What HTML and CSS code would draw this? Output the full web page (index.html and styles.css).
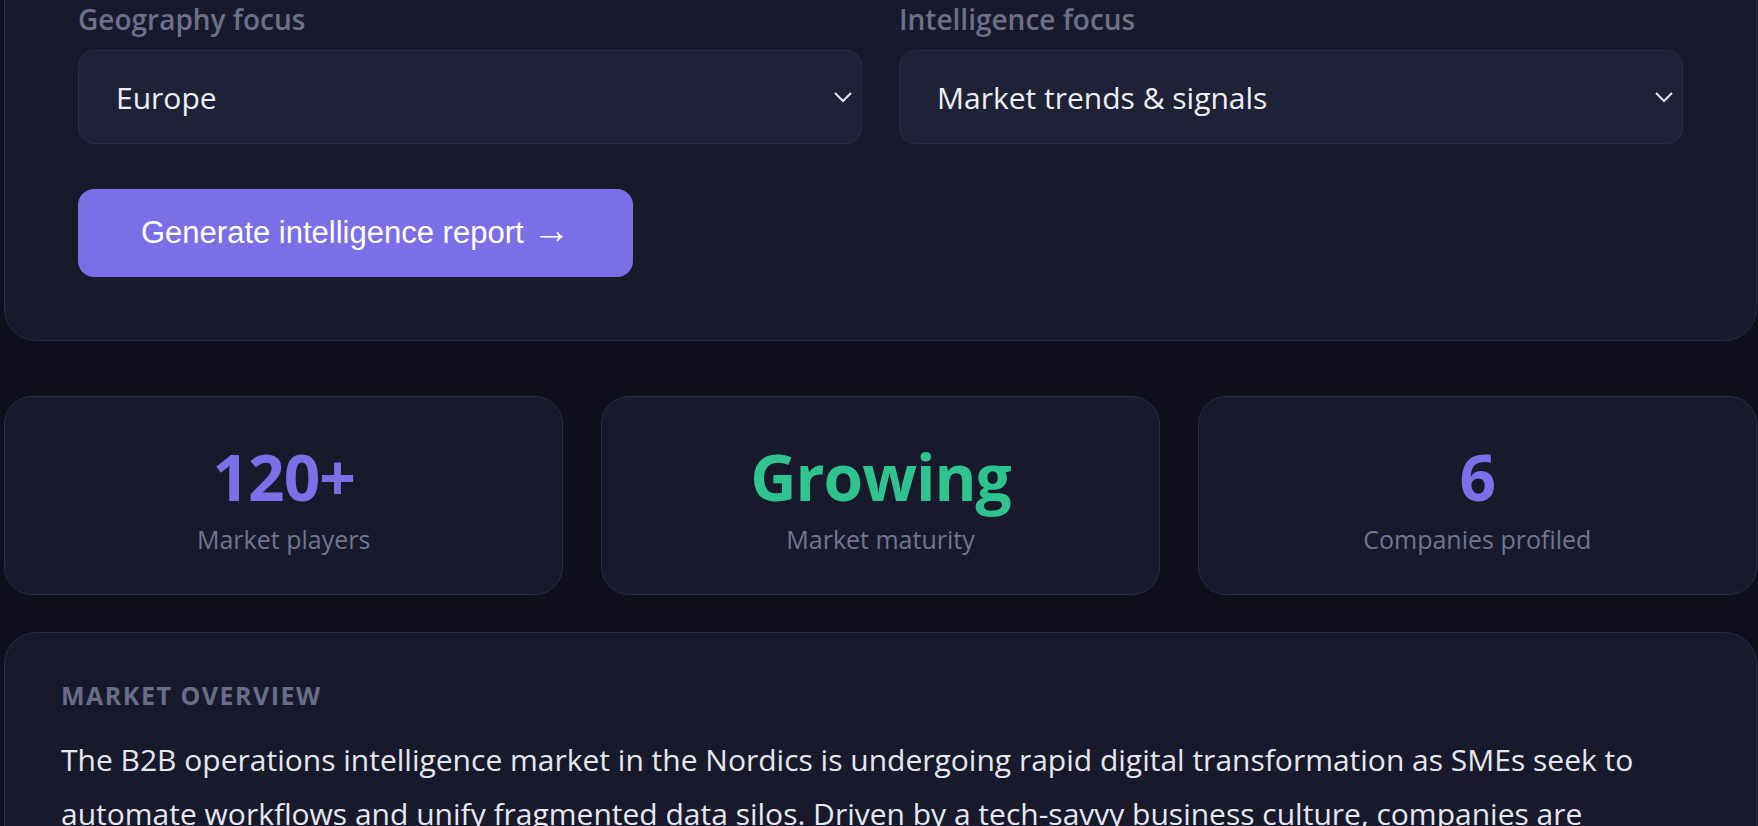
FILE: index.html
```html
<!DOCTYPE html>
<html lang="en">
<head>
  <meta charset="UTF-8" />
  <title>Market Intelligence</title>
  <link rel="stylesheet" href="styles.css">
</head>
<body>

  <main class="page">
    <section class="panel form-panel">
      <div class="fields">
        <div class="field">
          <label class="field-label" for="geo">Geography focus</label>
          <div class="select-wrap">
            <select class="select" id="geo">
              <option>Europe</option>
              <option>Nordics</option>
              <option>North America</option>
            </select>
            <svg class="chevron" width="18" height="11" viewBox="0 0 18 11"><path d="M1 1l8 8 8-8" fill="none" stroke="#e6e7ef" stroke-width="2"/></svg>
          </div>
        </div>
        <div class="field">
          <label class="field-label" for="focus">Intelligence focus</label>
          <div class="select-wrap">
            <select class="select" id="focus">
              <option>Market trends &amp; signals</option>
              <option>Competitor landscape</option>
              <option>Pricing</option>
            </select>
            <svg class="chevron" width="18" height="11" viewBox="0 0 18 11"><path d="M1 1l8 8 8-8" fill="none" stroke="#e6e7ef" stroke-width="2"/></svg>
          </div>
        </div>
      </div>
      <button class="btn-primary">Generate intelligence report <span class="arrow">&rarr;</span></button>
    </section>

    <section class="stats">
      <div class="stat">
        <div class="stat-value">120+</div>
        <div class="stat-label">Market players</div>
      </div>
      <div class="stat">
        <div class="stat-value green">Growing</div>
        <div class="stat-label">Market maturity</div>
      </div>
      <div class="stat">
        <div class="stat-value">6</div>
        <div class="stat-label">Companies profiled</div>
      </div>
    </section>

    <section class="panel overview">
      <h3 class="section-title">Market overview</h3>
      <p class="overview-text">
        The B2B operations intelligence market in the Nordics is undergoing rapid digital transformation as SMEs seek to
        automate workflows and unify fragmented data silos. Driven by a tech-savvy business culture, companies are
        increasingly adopting cloud-native platforms that combine analytics, process automation and real-time reporting.
      </p>
    </section>
  </main>

</body>
</html>
```

FILE: styles.css
```css
html, body {
  margin: 0;
  background: #0e0f1a;
  overflow: hidden;
}
body {
  font-family: "Segoe UI", "Open Sans", sans-serif;
  color: #e6e7ef;
}
.page {
  padding: 0 1px 0 4px;
}
.panel {
  background: #181a2b;
  border: 1px solid #2a2c45;
  border-radius: 32px;
}

/* form */
.form-panel {
  margin-top: -40px;
  padding: 39px 73px 63px;
}
.fields {
  display: grid;
  grid-template-columns: 1fr 1fr;
  gap: 37px;
}
.field-label {
  display: block;
  font-size: 28px;
  line-height: 39px;
  font-weight: 600;
  color: #6c7089;
  margin-bottom: 11px;
}
.select-wrap {
  position: relative;
}
.select {
  appearance: none;
  width: 100%;
  height: 94px;
  padding: 0 37px;
  background: #1f2136;
  border: 1px solid #2c2e48;
  border-radius: 16px;
  color: #eeeff5;
  font-family: inherit;
  font-size: 30px;
  outline: none;
}
.chevron {
  position: absolute;
  right: 10px;
  top: 42px;
}
.btn-primary {
  margin-top: 45px;
  padding: 0 63px;
  height: 88px;
  background: #7b6fe8;
  color: #fff;
  border: none;
  border-radius: 16px;
  font-family: "Liberation Sans", Arial, sans-serif;
  font-size: 31px;
}
.btn-primary .arrow {
  font-size: 38px;
  line-height: 0;
}

/* stats */
.stats {
  display: grid;
  grid-template-columns: repeat(3, 1fr);
  gap: 37.5px;
  margin-top: 55px;
}
.stat {
  background: #181a2b;
  border: 1px solid #2a2c45;
  border-radius: 28px;
  text-align: center;
  padding: 48px 0 35px;
}
.stat-value {
  font-size: 64px;
  line-height: 64px;
  font-weight: 700;
  letter-spacing: -1px;
  color: #7b70e8;
}
.stat-value.green {
  color: #2fc390;
}
.stat-label {
  margin-top: 11px;
  font-size: 25px;
  line-height: 39px;
  color: #72768f;
}

/* overview */
.overview {
  margin-top: 37px;
  padding: 44px 56px;
}
.section-title {
  margin: 0 0 19px;
  font-size: 25px;
  line-height: 37px;
  font-weight: 700;
  letter-spacing: 1.5px;
  text-transform: uppercase;
  color: #696d88;
}
.overview-text {
  margin: 0;
  font-size: 30px;
  line-height: 54px;
  color: #e6e7ef;
}
```
